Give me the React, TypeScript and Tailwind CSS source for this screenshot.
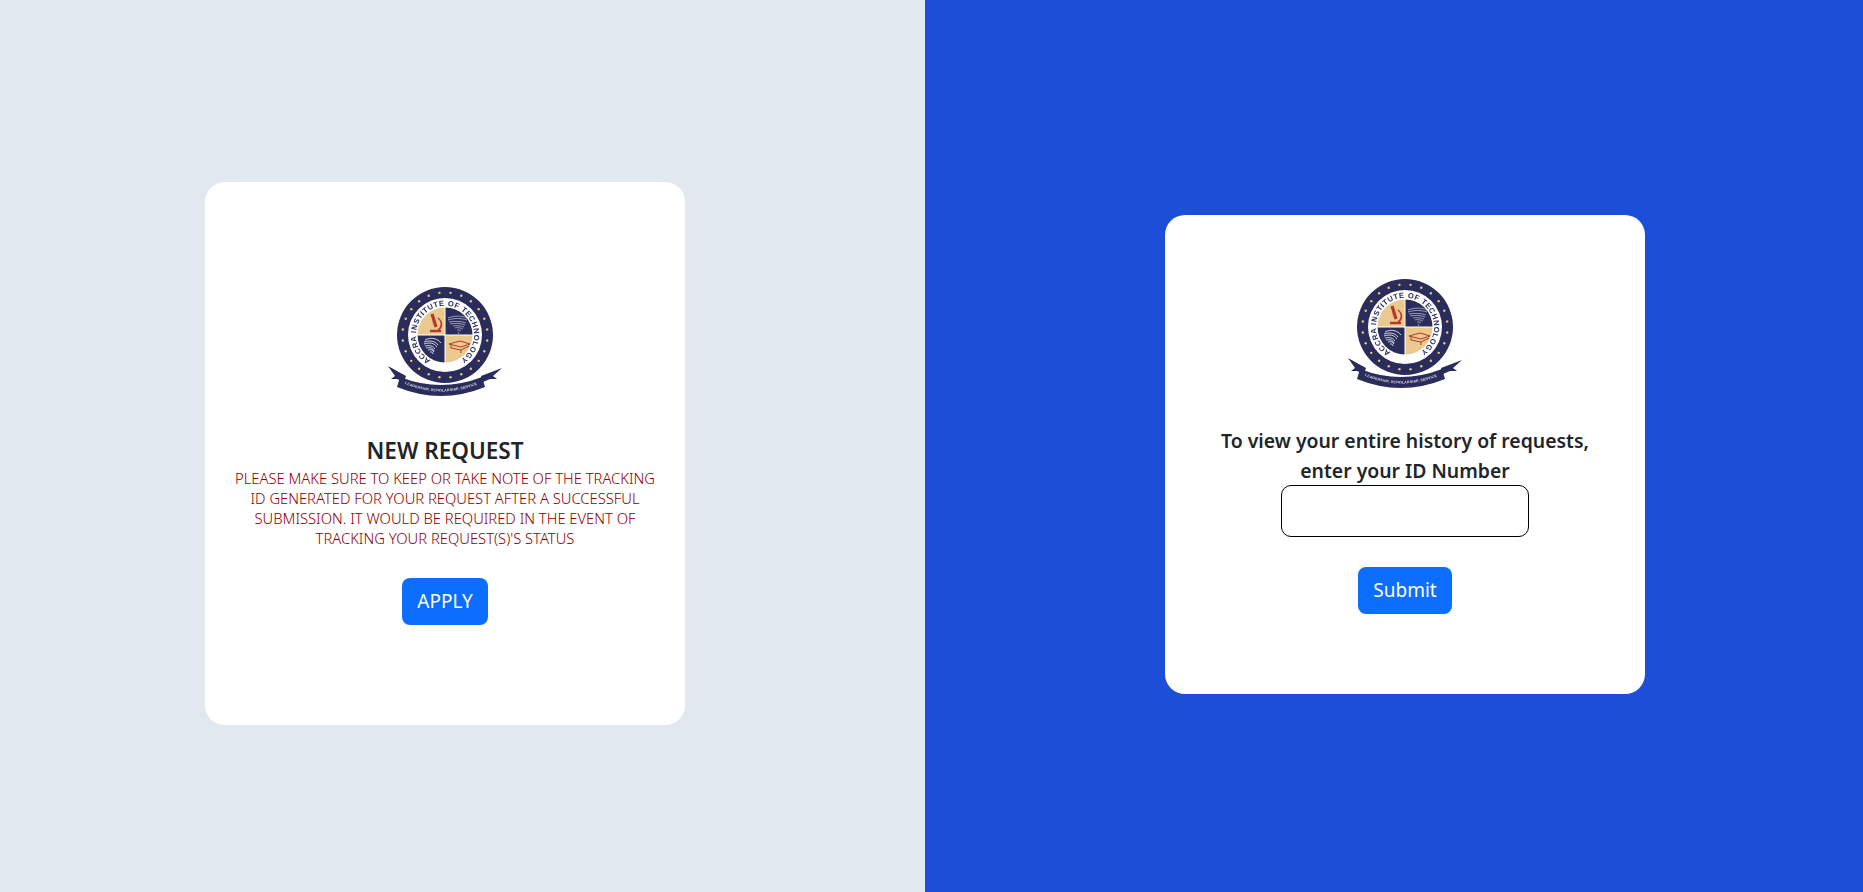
import React from "react";

const NAVY = "#2a2c5c";
const TAN = "#e9c98e";
const RED = "#b8352f";

const Logo = ({ id, className }: { id: string; className?: string }) => {
  const stars = Array.from({ length: 24 }, (_, i) => {
    const a = (i * Math.PI * 2) / 24 + Math.PI / 24;
    return { x: 76 + Math.cos(a) * 42.5, y: 67 + Math.sin(a) * 42.5 };
  });
  return (
    <svg
      width="160"
      height="140"
      viewBox="-4 0 160 140"
      className={"blur-[0.35px] " + (className ?? "")}
    >
      <defs>
        <path id={id + "-ring"} d="M 61.5 92 A 29 29 0 1 1 90.5 92" />
        <path id={id + "-band"} d="M 34 115 Q 72 132 112 115" />
      </defs>

      {/* seal */}
      <circle cx="76" cy="67" r="48" fill={NAVY} />
      <circle cx="76" cy="67" r="37" fill="#fff" />
      {stars.map((s, i) => (
        <circle key={i} cx={s.x} cy={s.y} r="1.2" fill="#e5c877" />
      ))}
      <path d="M76 67V39.5A27.5 27.5 0 0 0 48.5 67Z" fill={TAN} />
      <path d="M76 67V39.5A27.5 27.5 0 0 1 103.5 67Z" fill={NAVY} />
      <path d="M76 67H48.5A27.5 27.5 0 0 0 76 94.5Z" fill={NAVY} />
      <path d="M76 67H103.5A27.5 27.5 0 0 1 76 94.5Z" fill={TAN} />
      <path d="M76 38V96M47 67H105" stroke="#fff" strokeWidth="1" />

      {/* microscope */}
      <g fill="none" stroke={RED} strokeWidth="1.6">
        <path d="M63 46l4 13" strokeWidth="3.2" />
        <path d="M69 50c5 4 4 10 0 12" />
        <path d="M61 63h11" strokeWidth="2.4" />
      </g>

      {/* hurricane sketch */}
      <g fill="none" stroke="#b4b9cc" strokeWidth="0.8">
        <path d="M79 50c5-2 13-3 19 0" />
        <path d="M79 52c6-2 13-2 19 0" />
        <path d="M80 54c5-1 12-1 17 1" />
        <path d="M81 56c5-1 10-1 15 1" />
        <path d="M84 58c3-1 8 0 11 1" />
        <path d="M86 60c2-1 6 0 8 1" />
        <path d="M88 62c1 0 3 0 4 1" />
        <path d="M89 64l1 2" />
      </g>

      {/* eagle */}
      <g fill="none" stroke="#e6e9f2" strokeWidth="0.9">
        <path d="M56 72c6-3 12-2 16 3" />
        <path d="M55 74c6-2 11-1 14 3" />
        <path d="M55 76c6-2 10-1 13 3" />
        <path d="M56 78c5-1 8 0 10 3" />
        <path d="M57 80c4-1 7 0 8 3" />
        <path d="M59 82c3-1 5 0 6 2" />
        <path d="M61 84c2 0 3 0 3 2" />
      </g>

      {/* book and plane */}
      <g fill="none" stroke={RED} strokeWidth="1">
        <path d="M80 76l11-3 10 3-9 3z" />
        <path d="M82 77v3l10 2 8-4" />
        <path d="M92 82v3" />
      </g>

      <text
        fontFamily="'Liberation Sans', sans-serif"
        fontSize="7.6"
        fontWeight="700"
        fill={NAVY}
      >
        <textPath href={"#" + id + "-ring"} textLength="150" lengthAdjust="spacing">
          ACCRA INSTITUTE OF TECHNOLOGY
        </textPath>
      </text>

      {/* ribbon */}
      <path d="M19 98l18 10-2 6-7-3-6 0 4-3z" fill={NAVY} />
      <path d="M133 100l-21 8 2 6 7-3 7 0-4-3z" fill={NAVY} />
      <path d="M31 109Q72 125 113 109L116 119Q72 137 28 119Z" fill={NAVY} />
      <text
        fontFamily="'Liberation Sans', sans-serif"
        fontSize="3.6"
        fontWeight="700"
        fill="#d8d9e6"
      >
        <textPath href={"#" + id + "-band"} textLength="74" startOffset="2" lengthAdjust="spacing">
          LEADERSHIP, SCHOLARSHIP, SERVICE
        </textPath>
      </text>
    </svg>
  );
};

export default function App() {
  return (
    <div className="flex h-[892px] overflow-hidden font-['Noto_Sans',sans-serif] text-[#212529]">
      <div className="w-[925px] bg-slate-200 pl-[205px] pt-[182px]">
        <div className="flex h-[543px] w-[480px] flex-col items-center rounded-[20px] bg-white pt-[86px] text-center">
          <Logo id="left" />
          <h2 className="mt-[28px] text-[22.5px] font-semibold leading-[30px]">
            NEW REQUEST
          </h2>
          <p className="mt-[2px] w-[430px] text-[14.75px] font-light leading-[20px] text-[#8b0000]">
            PLEASE MAKE SURE TO KEEP OR TAKE NOTE OF THE TRACKING ID GENERATED
            FOR YOUR REQUEST AFTER A SUCCESSFUL SUBMISSION. IT WOULD BE REQUIRED
            IN THE EVENT OF TRACKING YOUR REQUEST(S)&apos;S STATUS
          </p>
          <button className="mt-[30px] h-[47px] w-[86px] rounded-lg bg-[#0d6efd] text-[19px] text-white">
            APPLY
          </button>
        </div>
      </div>

      <div className="flex-1 bg-[#1d4ed8] pl-[240px] pt-[215px]">
        <div className="flex h-[479px] w-[480px] flex-col items-center rounded-[20px] bg-white pt-[45px] text-center">
          <Logo id="right" />
          <h3 className="mt-[26px] -mb-px w-[400px] text-[19.4px] font-semibold leading-[30px]">
            To view your entire history of requests, enter your ID Number
          </h3>
          <input
            type="text"
            className="h-[52px] w-[248px] rounded-[10px] border border-black bg-white px-2"
          />
          <button className="mt-[30px] h-[47px] w-[94px] rounded-lg bg-[#0d6efd] text-[19px] text-white">
            Submit
          </button>
        </div>
      </div>
    </div>
  );
}
